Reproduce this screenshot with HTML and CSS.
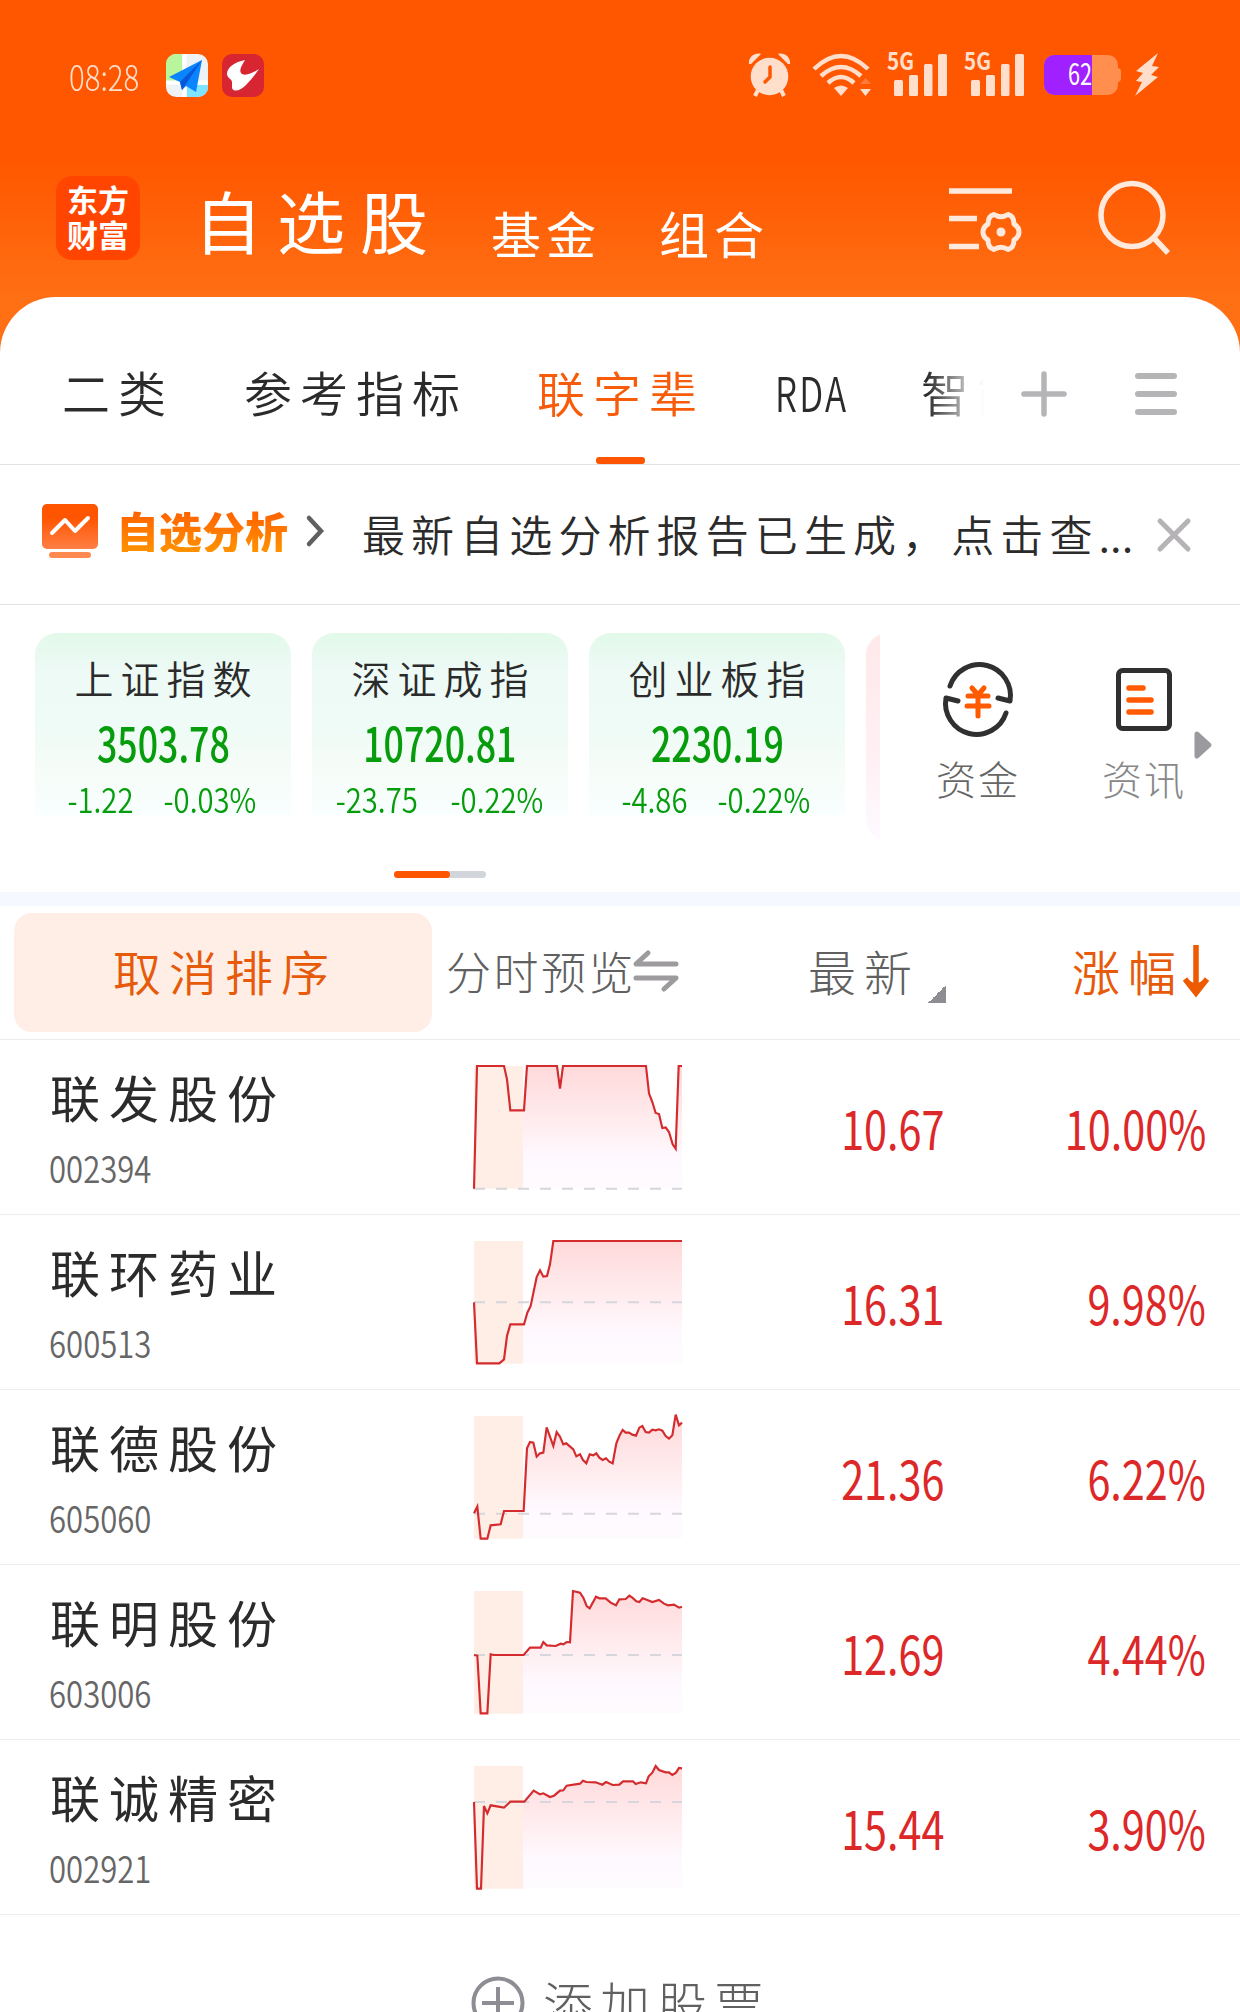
FILE: index.html
```html
<!DOCTYPE html>
<html lang="zh-CN">
<head>
    <meta charset="UTF-8">
    <meta name="viewport" content="width=device-width, initial-scale=1.0">
    <title>自选股</title>
    <link rel="stylesheet" href="styles.css">
</head>
<body>
    <header class="header">
        <div class="status-bar">
            <div class="time"><span class="num">08:28</span></div>
            <svg class="app-icon" width="42" height="43" viewBox="0 0 42 43">
                <defs><clipPath id="mapClip"><rect width="42" height="43" rx="10"/></clipPath></defs>
                <g clip-path="url(#mapClip)">
                    <rect width="42" height="43" fill="#eef2f5"/>
                    <rect width="16" height="27" fill="#b9f59a"/>
                    <rect x="21" y="31" width="21" height="12" fill="#7fe4ff"/>
                    <path d="M18.500 0V43M0 28.500H42" stroke="#fff" stroke-width="4"/>
                    <path d="M36 6L3 23L14 28L16 36L20 32L30 38Z" fill="#0a84ff"/>
                    <path d="M36 6L14 28L16 36L20 30Z" fill="#0757d8"/>
                </g>
            </svg>
            <svg class="app-icon" width="42" height="43" viewBox="0 0 42 43">
                <rect width="42" height="43" rx="10" fill="#d72631"/>
                <path d="M23 6C13 8 5 13 5 20C5 24 10 25 10 28V34C12 39 19 36 24 31C29 26 33 21 37 15C31 19 24 22 20 20C16 17 20 11 23 6Z" fill="#fff"/>
            </svg>
            <div class="status-right">
                <svg width="44" height="44" viewBox="0 0 44 44" class="alarm">
                    <g fill="#ffdecb">
                        <circle cx="21.500" cy="23.500" r="18.800"/>
                        <path d="M1 11C0 4 7-1 13 1L3 11ZM42 11C43 4 36-1 30 1L40 11Z"/>
                    </g>
                    <path d="M10 37L7 43M33 37L36 43" stroke="#ffdecb" stroke-width="4"/>
                    <path d="M22 14V24L17 29" fill="none" stroke="#ff5700" stroke-width="3.500" stroke-linecap="round"/>
                </svg>
                <svg width="60" height="44" viewBox="0 0 60 44" class="wifi">
                    <g fill="none" stroke="#ffdecb" stroke-width="4.500">
                        <path d="M2 16Q29-10 56 16"/>
                        <path d="M9 23Q29 5 49 23"/>
                        <path d="M16 30Q29 18 42 30"/>
                    </g>
                    <path d="M22 35Q29 30 36 35L29 43Z" fill="#ffdecb"/>
                    <path d="M48 36H59L53.500 43Z" fill="#ffdecb"/>
                    <path d="M48 31H59L53.500 25Z" fill="#ff7a3b"/>
                </svg>
                <svg width="60" height="44" viewBox="0 0 60 44" class="signal">
                    <g fill="#ffdecb">
                        <text x="-1" y="17" class="net" textLength="27" lengthAdjust="spacingAndGlyphs">5G</text>
                        <rect x="6" y="27" width="9" height="16" rx="1.500"/>
                        <rect x="21" y="22" width="9" height="21" rx="1.500"/>
                        <rect x="36" y="11" width="8.500" height="32" rx="1.500"/>
                        <rect x="50" y="1" width="9" height="42" rx="1.500"/>
                    </g>
                </svg>
                <svg width="60" height="44" viewBox="0 0 60 44" class="signal">
                    <g fill="#ffdecb">
                        <text x="-1" y="17" class="net" textLength="27" lengthAdjust="spacingAndGlyphs">5G</text>
                        <rect x="6" y="27" width="9" height="16" rx="1.500"/>
                        <rect x="21" y="22" width="9" height="21" rx="1.500"/>
                        <rect x="36" y="11" width="8.500" height="32" rx="1.500"/>
                        <rect x="50" y="1" width="9" height="42" rx="1.500"/>
                    </g>
                </svg>
                <svg width="78" height="40" viewBox="0 0 78 40" class="battery">
                    <defs><clipPath id="batClip"><rect width="74" height="40" rx="10"/></clipPath></defs>
                    <rect x="70" y="13" width="7" height="14" rx="4" fill="#ff8e4f"/>
                    <g clip-path="url(#batClip)">
                        <rect width="74" height="40" fill="#ff8e4f"/>
                        <rect width="48" height="40" fill="#a020ff"/>
                    </g>
                    <text x="24" y="30" class="bat-text" textLength="24" lengthAdjust="spacingAndGlyphs">62</text>
                </svg>
                <svg width="26" height="44" viewBox="0 0 26 44">
                    <path d="M24 0L2 18L9 20L2 28L8 29L1 43L24 24L17 22L25 14L18 13Z" fill="#ffdecb"/>
                </svg>
            </div>
        </div>
        <div class="title-bar">
            <div class="logo"><div>东方</div><div>财富</div></div>
            <div class="title">自选股</div>
            <div class="sub-title">基金</div>
            <div class="sub-title">组合</div>
            <svg class="icon-settings" width="74" height="66" viewBox="0 0 74 66">
                <g fill="none" stroke="#ffe9dc">
                    <path d="M0 5H63M0 32.500H28M0 60.500H30" stroke-width="5.500"/>
                    <path d="M45 28.500Q52 33 59 28.500Q65 30 65 38Q70 41 70 46Q70 51 65 54Q65 62 59 63.500Q52 59 45 63.500Q39 62 39 54Q34 51 34 46Q34 41 39 38Q39 30 45 28.500Z" stroke-width="5" stroke-linejoin="round"/>
                </g>
                <circle cx="52" cy="46" r="4.500" fill="#ffe9dc"/>
            </svg>
            <svg class="icon-search" width="74" height="76" viewBox="0 0 74 76">
                <g fill="none" stroke="#ffe9dc" stroke-width="5.500">
                    <ellipse cx="35" cy="35" rx="31" ry="31.500"/>
                    <path d="M56 57L71 73"/>
                </g>
            </svg>
        </div>
    </header>

    <main class="panel">
        <nav class="tabs">
            <div class="tab-list">
                <span class="tab t1">二类</span>
                <span class="tab t2">参考指标</span>
                <span class="tab t3 active">联字辈</span>
                <span class="tab t4"><span class="num">RDA</span></span>
                <span class="tab t5">智能</span>
            </div>
            <svg class="icon-plus" width="46" height="46" viewBox="0 0 46 46">
                <path d="M23 3V43M3 23H43" stroke="#b5b5b8" stroke-width="5.500" stroke-linecap="round"/>
            </svg>
            <svg class="icon-menu" width="44" height="46" viewBox="0 0 44 46">
                <path d="M4 5H40M4 23H40M4 41H40" stroke="#b5b5b8" stroke-width="6" stroke-linecap="round"/>
            </svg>
        </nav>

        <section class="report">
            <svg width="56" height="54" viewBox="0 0 56 54">
                <defs>
                    <linearGradient id="repGrad" x1="0" y1="0" x2="0" y2="1">
                        <stop offset="0.300" stop-color="#ff5500"/>
                        <stop offset="1" stop-color="#ff7f45"/>
                    </linearGradient>
                </defs>
                <rect width="56" height="45" rx="5" fill="url(#repGrad)"/>
                <path d="M10 29L23 16L33 27L46 14" fill="none" stroke="#fff" stroke-width="4" stroke-linecap="round" stroke-linejoin="round"/>
                <rect x="7" y="48" width="42" height="6" rx="3" fill="#ff8a50"/>
            </svg>
            <span class="report-title">自选分析</span>
            <svg class="chevron" width="18" height="32" viewBox="0 0 18 32">
                <path d="M3 3L15 16L3 29" fill="none" stroke="#606060" stroke-width="4.500" stroke-linecap="round"/>
            </svg>
            <span class="report-text">最新自选分析报告已生成，点击查<span class="dots">...</span></span>
            <svg class="close" width="36" height="36" viewBox="0 0 36 36">
                <path d="M4 4L32 32M32 4L4 32" stroke="#b5b3b5" stroke-width="5" stroke-linecap="round"/>
            </svg>
        </section>

        <section class="market">
            <div class="cards">
                <div class="card">
                    <div class="card-name">上证指数</div>
                    <div class="card-value"><span class="num">3503.78</span></div>
                    <div class="card-diff"><span class="num">-1.22</span><span class="num">-0.03%</span></div>
                </div>
                <div class="card">
                    <div class="card-name">深证成指</div>
                    <div class="card-value"><span class="num">10720.81</span></div>
                    <div class="card-diff"><span class="num">-23.75</span><span class="num">-0.22%</span></div>
                </div>
                <div class="card">
                    <div class="card-name">创业板指</div>
                    <div class="card-value"><span class="num">2230.19</span></div>
                    <div class="card-diff"><span class="num">-4.86</span><span class="num">-0.22%</span></div>
                </div>
                <div class="card red"></div>
            </div>
            <div class="shortcuts">
                <div class="shortcut">
                    <svg width="70" height="70" viewBox="0 0 70 70">
                        <g fill="none" stroke="#303030" stroke-width="5" stroke-linejoin="round" stroke-linecap="round">
                            <path d="M7 22A31 31 0 0 1 67 37L55 34"/>
                            <path d="M63 49A31 31 0 0 1 3 34L15 37"/>
                        </g>
                        <path d="M29 24L35 31L41 24M25 32H45M24 42H46M35 31V52" fill="none" stroke="#ff5a00" stroke-width="5" stroke-linecap="round"/>
                    </svg>
                    <span>资金</span>
                </div>
                <div class="shortcut">
                    <svg width="70" height="70" viewBox="0 0 70 70">
                        <rect x="9.500" y="6.500" width="51" height="58" rx="4" fill="none" stroke="#303030" stroke-width="5"/>
                        <path d="M20 24H34M20 36H42M20 48H42" stroke="#ff5a00" stroke-width="5.500" stroke-linecap="round"/>
                    </svg>
                    <span>资讯</span>
                </div>
                <svg class="more" width="20" height="30" viewBox="0 0 20 30">
                    <path d="M4 4L16 15L4 26Z" fill="#9a9a9f" stroke="#9a9a9f" stroke-width="5" stroke-linejoin="round"/>
                </svg>
            </div>
            <div class="pager"><div class="pager-on"></div></div>
        </section>

        <section class="table-head">
            <div class="cancel">取消排序</div>
            <div class="col-preview">分时预览</div>
            <svg class="swap" width="46" height="42" viewBox="0 0 46 42">
                <path d="M15 3L3 14H43M3 28H43L31 39" fill="none" stroke="#9d9b9d" stroke-width="5" stroke-linecap="round" stroke-linejoin="round"/>
            </svg>
            <div class="col-last">最新</div>
            <div class="corner"></div>
            <div class="col-change">涨幅</div>
            <svg class="sort-arrow" width="26" height="54" viewBox="0 0 26 54">
                <path d="M13 0V46M2 34L13 48L24 34" fill="none" stroke="#ee5a00" stroke-width="5.500"/>
                <path d="M3 34L13 39L23 34L13 50Z" fill="#ee5a00"/>
            </svg>
        </section>

        <section id="stocks"></section>

        <div class="add">
            <svg width="54" height="54" viewBox="0 0 54 54">
                <circle cx="27" cy="27" r="24.500" fill="none" stroke="#8d8d93" stroke-width="4"/>
                <path d="M27 11V43M11 27H43" stroke="#8d8d93" stroke-width="4"/>
            </svg>
            <span>添加股票</span>
        </div>
    </main>

    <script src="app.js"></script>
</body>
</html>
```

FILE: styles.css
```css
body {
    margin: 0;
    width: 1240px;
    height: 2012px;
    overflow: hidden;
    background: #fff;
    color: #2b2b2b;
    font-family: "Noto Sans CJK SC", sans-serif;
    font-weight: 300;
    line-height: 1;
}
svg {
    display: block;
    flex: none;
    overflow: visible;
}
span, div {
    white-space: nowrap;
}

/* narrow figures */
.num {
    display: inline-block;
    transform: scaleX(0.78);
    transform-origin: left center;
}

/* header */
.header {
    height: 355px;
    background: linear-gradient(#ff5700 160px, #ff6f14 297px);
}
.status-bar {
    display: flex;
    align-items: center;
    height: 150px;
    padding-left: 69px;
}
.time {
    width: 97px;
    font-size: 35px;
    color: #ffdecb;
}
.time .num {
    transform: scaleX(0.84);
}
.app-icon {
    margin-right: 14px;
}
.status-right {
    display: flex;
    align-items: center;
    margin-left: 470px;
}
.alarm {
    margin-right: 20px;
}
.wifi {
    margin-right: 16px;
}
.signal {
    margin-right: 17px;
}
.battery {
    margin-left: 2px;
    margin-right: 12px;
}
.net {
    font-size: 24px;
    font-weight: 700;
}
.bat-text {
    font-size: 30px;
    font-weight: 400;
    fill: #fff;
}
.title-bar {
    display: flex;
    align-items: center;
    height: 147px;
    padding-left: 56px;
    color: #fff;
}
.logo {
    box-sizing: border-box;
    width: 84px;
    height: 84px;
    margin: 0 54px 11px 0;
    padding-top: 5px;
    border-radius: 16px;
    background: #ff4500;
    font-size: 31px;
    font-weight: 700;
    line-height: 35px;
    text-align: center;
}
.title {
    width: 297px;
    margin-top: -7px;
    font-size: 68px;
    letter-spacing: 15px;
    font-weight: 400;
}
.sub-title {
    width: 168px;
    padding-top: 16px;
    font-size: 50px;
    letter-spacing: 5px;
    font-weight: 400;
}
.icon-settings {
    margin: 0 74px 10px 122px;
}
.icon-search {
    margin-bottom: 12px;
}

/* white panel */
.panel {
    height: 1715px;
    margin-top: -58px;
    border-radius: 56px 56px 0 0;
    background: #fff;
    overflow: hidden;
}
.tabs {
    display: flex;
    align-items: center;
    box-sizing: border-box;
    height: 168px;
    padding: 26px 0 0 62px;
    border-bottom: 1px solid #e2e2e2;
}
.tab-list {
    display: flex;
    width: 924px;
    overflow: hidden;
    -webkit-mask-image: linear-gradient(to right, #000 865px, transparent 922px);
    mask-image: linear-gradient(to right, #000 865px, transparent 922px);
}
.tab {
    flex: none;
    height: 141px;
    line-height: 136px;
    font-size: 48px;
    letter-spacing: 8px;
    font-weight: 350;
}
.t1 { width: 182px; }
.t2 { width: 293px; }
.t3 { width: 240px; }
.t4 { width: 144px; letter-spacing: 3px; }
.t4 .num { transform: translateX(-2px) scaleX(0.73); }
.active {
    position: relative;
    color: #f75c0a;
}
.active::after {
    content: "";
    position: absolute;
    left: 59px;
    bottom: 0;
    width: 49px;
    height: 7px;
    border-radius: 3px;
    background: #ff5500;
}
.icon-plus {
    margin-left: 35px;
}
.icon-menu {
    margin-left: 67px;
}
.report {
    display: flex;
    align-items: center;
    box-sizing: border-box;
    height: 140px;
    padding: 0 0 8px 42px;
    border-bottom: 1px solid #e2e2e2;
}
.report-title {
    width: 190px;
    margin-left: 18px;
    font-size: 43px;
    font-weight: 900;
    background: linear-gradient(#ff5f00, #ff9200);
    -webkit-background-clip: text;
    background-clip: text;
    color: transparent;
}
.report-text {
    width: 794px;
    margin-left: 38px;
    padding-top: 5px;
    font-size: 43px;
    letter-spacing: 6.1px;
    font-weight: 350;
}
.dots {
    letter-spacing: 0;
}
.close {
    margin-top: 8px;
}

/* indices */
.market {
    display: grid;
    grid-template-columns: 880px 360px;
    grid-template-rows: 238px 21px;
    box-sizing: border-box;
    height: 301px;
    padding-top: 28px;
    border-bottom: 14px solid #f5f9ff;
}
.cards {
    display: flex;
    gap: 21px;
    padding-left: 35px;
    overflow: hidden;
}
.card {
    flex: none;
    width: 256px;
    height: 182px;
    border-radius: 22px 22px 0 0;
    background: linear-gradient(#e2f9e9, #edfaf6 20%, #eefbf6 50%, #f6fcf7 75%, #f8ffff);
    text-align: center;
}
.card.red {
    height: 208px;
    border-radius: 22px;
    background: linear-gradient(#ffe8ea, #fff0f4 60%, #fdfaff);
}
.card-name {
    margin-top: 25px;
    height: 38px;
    font-size: 39px;
    letter-spacing: 7px;
    text-indent: 7px;
    font-weight: 350;
}
.card-value {
    height: 47px;
    margin-top: 22px;
    font-size: 47px;
    font-weight: 500;
    color: #069c0c;
}
.card-value .num {
    transform-origin: center;
    transform: scaleX(0.76);
}
.card-diff {
    display: flex;
    justify-content: center;
    gap: 18px;
    margin-top: 17px;
    font-size: 34px;
    color: #069c0c;
    font-weight: 350;
}
.card-diff .num {
    transform-origin: center;
    transform: scaleX(0.86);
}
.shortcuts {
    display: flex;
    padding-left: 32px;
}
.shortcut {
    width: 132px;
    padding-top: 31px;
    text-align: center;
    font-size: 40px;
    letter-spacing: 2px;
    color: #666;
}
.shortcut svg {
    margin: 0 auto 24px;
}
.shortcut + .shortcut {
    margin-left: 34px;
}
.shortcut + .shortcut span {
    color: #888;
}
.more {
    margin: 97px 0 0 -17px;
}
.pager {
    width: 92px;
    height: 7px;
    margin-left: 394px;
    border-radius: 4px;
    background: #d3d5dc;
}
.pager-on {
    width: 56px;
    height: 7px;
    border-radius: 4px;
    background: #ff5500;
}

/* table */
.table-head {
    display: flex;
    align-items: center;
    box-sizing: border-box;
    height: 134px;
    padding-left: 14px;
    border-bottom: 1px solid #ececec;
    font-size: 48px;
    letter-spacing: 8px;
    color: #606060;
}
.cancel {
    box-sizing: border-box;
    width: 418px;
    height: 119px;
    padding-left: 99px;
    border-radius: 18px;
    background: #ffeee6;
    color: #e65a0a;
    line-height: 115px;
    font-weight: 350;
}
.col-preview {
    width: 187px;
    margin: -4px 0 0 14px;
    font-size: 45px;
    letter-spacing: 2.500px;
}
.swap {
    margin-top: -3px;
}
.col-last {
    margin: -5px 0 0 129px;
    width: 120px;
}
.corner {
    width: 18px;
    height: 18px;
    margin-top: 42px;
    background: linear-gradient(to bottom right, transparent 50%, #8d8d93 50%);
}
.col-change {
    margin: -5px 0 0 126px;
    width: 111px;
    color: #e65a0a;
    font-weight: 350;
}
.sort-arrow {
    margin-top: -2px;
}
.stock {
    display: grid;
    grid-template-columns: 424px 208px 261px 262px;
    box-sizing: border-box;
    height: 175px;
    padding-left: 50px;
    border-bottom: 1px solid #ececec;
}
.stock-name {
    padding-top: 31px;
    font-size: 50px;
    letter-spacing: 9px;
    font-weight: 400;
}
.stock-code {
    margin-top: 28px;
    font-size: 37px;
    color: #666;
    font-weight: 350;
}
.stock-code .num {
    transform: translateX(-1px) scaleX(0.84);
}
.chart {
    margin-top: 26px;
}
.figure {
    font-size: 53px;
    line-height: 175px;
    height: 174px;
    text-align: right;
    color: #dc2828;
    font-weight: 400;
}
.figure .num {
    transform: translateX(1px) scaleX(0.78);
    transform-origin: right center;
}
.add {
    display: flex;
    align-items: center;
    padding: 61px 0 0 471px;
    font-size: 50px;
    letter-spacing: 7px;
    color: #606060;
}
.add span {
    margin: -3px 0 0 18px;
}
```

FILE: app.js
```js
// prev: y of the dashed previous-close line, points: price line (624 x 368 canvas)
const stocks = [
    {
        name: '联发股份', code: '002394', last: '10.67', change: '10.00%', prev: 368,
        points: '0,368 9,0 90,0 99,40 109,133 150,133 159,0 249,0 258,68 267,0 516,0 525,82 535,108 545,141 555,144 565,186 575,184 585,198 596,235 605,248 614,0 624,0'
    },
    {
        name: '联环药业', code: '600513', last: '16.31', change: '9.98%', prev: 184,
        points: '0,184 9,367 76,367 90,355 99,285 109,250 150,250 160,215 170,195 188,108 198,88 208,107 219,105 228,70 238,0 624,0'
    },
    {
        name: '联德股份', code: '605060', last: '21.36', change: '6.22%', prev: 293,
        points: '0,292 10,272 20,368 40,368 50,328 80,325 90,285 149,285 159,97 168,78 178,80 188,122 198,112 208,110 218,34 238,90 248,48 258,62 268,85 277,82 298,100 307,121 318,115 327,132 337,142 347,115 358,118 367,112 376,125 386,132 396,127 406,137 416,142 427,82 437,58 446,42 455,50 465,50 475,56 486,59 496,35 505,30 515,48 525,50 535,41 545,43 555,40 565,44 575,60 585,68 595,58 605,-4 615,28 624,20'
    },
    {
        name: '联明股份', code: '603006', last: '12.69', change: '4.44%', prev: 192,
        points: '0,192 10,194 20,367 40,367 50,190 60,192 149,192 168,170 200,170 208,153 218,163 245,165 260,158 268,160 278,153 288,154 297,0 318,5 328,20 338,45 347,52 366,17 376,22 395,22 410,35 426,43 436,25 455,24 466,14 475,20 487,31 496,33 506,22 520,27 535,33 555,27 570,38 582,43 600,41 615,50 624,47'
    },
    {
        name: '联诚精密', code: '002921', last: '15.44', change: '3.90%', prev: 108,
        points: '0,108 9,368 21,368 30,120 40,142 50,118 90,125 109,107 151,107 179,74 198,85 208,82 228,93 240,89 258,74 268,73 278,59 318,53 327,44 337,48 365,49 385,56 396,48 416,57 436,56 447,46 477,46 485,54 500,49 516,52 524,31 535,20 545,0 555,12 575,19 585,19 595,27 606,20 615,6 624,7'
    }
];

document.getElementById('stocks').innerHTML = stocks.map((s, i) => `
    <div class="stock">
        <div>
            <div class="stock-name">${s.name}</div>
            <div class="stock-code"><span class="num">${s.code}</span></div>
        </div>
        <svg class="chart" width="208" height="123" viewBox="0 0 624 369">
            <defs>
                <linearGradient id="fill${i}" gradientUnits="userSpaceOnUse" x1="0" y1="0" x2="0" y2="368">
                    <stop offset="0" stop-color="#ffd9da"/>
                    <stop offset="0.400" stop-color="#ffeaec"/>
                    <stop offset="0.750" stop-color="#fef9fe"/>
                    <stop offset="1" stop-color="#fefbff"/>
                </linearGradient>
                <clipPath id="clip${i}"><rect x="147" y="-10" width="477" height="378"/></clipPath>
            </defs>
            <rect width="147" height="368" fill="#ffeee6"/>
            <polygon points="0,368 ${s.points} 624,368" fill="url(#fill${i})" clip-path="url(#clip${i})"/>
            <path d="M0 ${s.prev}H624" stroke="#d6d6dc" stroke-width="6" stroke-dasharray="33 33"/>
            <polyline points="${s.points}" fill="none" stroke="#d42c2e" stroke-width="6.5"/>
        </svg>
        <div class="figure"><span class="num">${s.last}</span></div>
        <div class="figure"><span class="num">${s.change}</span></div>
    </div>`).join('');
```
